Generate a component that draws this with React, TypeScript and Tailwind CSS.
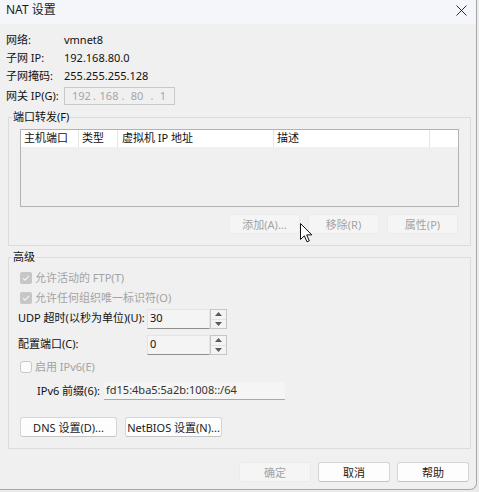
import React from "react";

const FONT = "[font-family:'Noto_Sans','Noto_Sans_CJK_SC',sans-serif]";

function Btn({ children, disabled, cls }: { children: React.ReactNode; disabled?: boolean; cls: string }) {
  return (
    <div
      className={
        "h-[20px] flex items-center justify-center rounded-[3px] border text-[11px] leading-none " +
        (disabled
          ? "bg-[#f5f5f5] border-[#ebebeb] text-[#a3a3a3] "
          : "bg-[#fdfdfd] border-[#d6d6d6] border-b-[#c4c4c4] text-[#1a1a1a] ") +
        cls
      }
    >
      {children}
    </div>
  );
}

function Check({ checked }: { checked?: boolean }) {
  if (checked) {
    return (
      <span className="w-[12px] h-[12px] rounded-[2px] bg-[#c6c6c6] flex items-center justify-center shrink-0">
        <svg viewBox="0 0 12 12" className="w-[12px] h-[12px]">
          <path d="M3 6.3 L5 8.2 L9 3.9" stroke="#f4f4f4" strokeWidth="1.2" fill="none" />
        </svg>
      </span>
    );
  }
  return <span className="w-[12px] h-[12px] rounded-[3px] border border-[#c9c9c9] bg-[#fbfbfb] shrink-0" />;
}

function Spinner() {
  return (
    <div className="w-[17px] h-[20px] border border-[#c6c6c6] bg-[#f3f3f3] flex flex-col">
      <div className="flex-1 flex items-center justify-center border-b border-[#e2e2e2]">
        <svg viewBox="0 0 7 4" className="w-[7px] h-[4px]">
          <path d="M0 4 L3.5 0 L7 4 Z" fill="#5a5a5a" />
        </svg>
      </div>
      <div className="flex-1 flex items-center justify-center">
        <svg viewBox="0 0 7 4" className="w-[7px] h-[4px]">
          <path d="M0 0 L7 0 L3.5 4 Z" fill="#5a5a5a" />
        </svg>
      </div>
    </div>
  );
}

function NumField({ value }: { value: string }) {
  return (
    <div className="flex ml-auto">
      <div className="w-[63px] h-[20px] bg-[#f4f4f4] border border-[#e4e4e4] border-b-[#8e8e8e] pl-[2px] text-[11px] leading-[15px] text-[#111]">
        {value}
      </div>
      <Spinner />
    </div>
  );
}

export default function App() {
  return (
    <div className={"w-[479px] h-[492px] bg-[#ebebeb] relative overflow-hidden " + FONT}>
      <div className="w-[477px] h-[490px] bg-[#f0f0f0] border-r border-b border-[#a8a8a8] rounded-br-[7px] flex flex-col text-[#111]">
        {/* Title bar */}
        <div className="h-[24px] bg-[#f5f6f9] flex items-start justify-between pl-[6px] pr-[9px] pt-[3px]">
          <span className="text-[12px] leading-[14px] text-[#1a1a1a]">NAT 设置</span>
          <svg viewBox="0 0 11 11" className="w-[11px] h-[11px] mt-[2px]">
            <path d="M0.5 0.5 L10.5 10.5 M10.5 0.5 L0.5 10.5" stroke="#2a2a2a" strokeWidth="1" />
          </svg>
        </div>

        {/* Body */}
        <div className="flex flex-col px-[6px] pt-[7px] text-[11px]">
          <div className="h-[18px] flex items-center">
            <span className="w-[58px]">网络:</span>
            <span>vmnet8</span>
          </div>
          <div className="h-[18px] flex items-center">
            <span className="w-[58px]">子网 IP:</span>
            <span>192.168.80.0</span>
          </div>
          <div className="h-[18px] flex items-center">
            <span className="w-[58px]">子网掩码:</span>
            <span>255.255.255.128</span>
          </div>
          <div className="h-[18px] mt-[2px] flex items-center">
            <span className="w-[58px]">网关 IP(G):</span>
            <div className="w-[111px] h-[18px] border border-[#c8c8c8] bg-[#f0f0f0] flex items-center text-[#a6a6a6] pl-[7px]">
              <span className="w-[18px] text-center">192</span>
              <span className="w-[9px] text-center">.</span>
              <span className="w-[20px] text-center">168</span>
              <span className="w-[8px] text-center">.</span>
              <span className="w-[20px] text-center">80</span>
              <span className="w-[10px] text-center">.</span>
              <span className="w-[12px] text-center">1</span>
            </div>
          </div>

          {/* Port forwarding group */}
          <div className="mt-[12px] ml-[2px] w-[463px] h-[129px] border border-[#dcdcdc] flex flex-col">
            <span className="-mt-[8px] ml-[3px] px-[1px] w-fit bg-[#f0f0f0] leading-[14px]">端口转发(F)</span>
            <div className="mt-[5px] ml-[11px] w-[439px] h-[78px] border border-[#b3b3b3] flex flex-col">
              <div className="h-[17px] bg-white flex items-center">
                <span className="w-[58px] h-full border-r border-[#e5e5e5] pl-[3px] flex items-center">主机端口</span>
                <span className="w-[39px] h-full border-r border-[#e5e5e5] pl-[3px] flex items-center">类型</span>
                <span className="w-[156px] h-full border-r border-[#e5e5e5] pl-[4px] flex items-center">虚拟机 IP 地址</span>
                <span className="w-[156px] h-full border-r border-[#e5e5e5] pl-[3px] flex items-center">描述</span>
              </div>
            </div>
            <div className="mt-[7px] flex gap-[8px] justify-end pr-[12px]">
              <Btn disabled cls="w-[71px]">添加(A)...</Btn>
              <Btn disabled cls="w-[71px]">移除(R)</Btn>
              <Btn disabled cls="w-[71px]">属性(P)</Btn>
            </div>
          </div>

          {/* Advanced group */}
          <div className="mt-[11px] ml-[2px] w-[463px] h-[192px] border border-[#dcdcdc] flex flex-col">
            <span className="-mt-[8px] ml-[3px] px-[1px] w-fit bg-[#f0f0f0] leading-[14px]">高级</span>
            <div className="mt-[4px] ml-[11px] h-[20px] flex items-center gap-[3px] text-[#a3a3a3]">
              <Check checked />
              <span>允许活动的 FTP(T)</span>
            </div>
            <div className="ml-[11px] h-[20px] flex items-center gap-[3px] text-[#a3a3a3]">
              <Check checked />
              <span>允许任何组织唯一标识符(O)</span>
            </div>
            <div className="mt-[1px] ml-[9px] w-[209px] h-[20px] flex items-center">
              <span className="-mt-[1px]">UDP 超时(以秒为单位)(U):</span>
              <NumField value="30" />
            </div>
            <div className="mt-[6px] ml-[9px] w-[209px] h-[20px] flex items-center">
              <span className="-mt-[1px]">配置端口(C):</span>
              <NumField value="0" />
            </div>
            <div className="mt-[2px] ml-[11px] h-[20px] flex items-center gap-[3px] text-[#a3a3a3]">
              <Check />
              <span>启用 IPv6(E)</span>
            </div>
            <div className="mt-[5px] ml-[28px] h-[18px] flex items-center">
              <span className="w-[67px]">IPv6 前缀(6):</span>
              <div className="w-[181px] h-[18px] bg-[#f5f5f5] border-b border-[#a9a9a9] pl-[2px] flex items-center text-[#333]">
                fd15:4ba5:5a2b:1008::/64
              </div>
            </div>
            <div className="mt-[17px] ml-[11px] flex gap-[8px]">
              <Btn cls="w-[97px]">DNS 设置(D)...</Btn>
              <Btn cls="w-[97px]">NetBIOS 设置(N)...</Btn>
            </div>
          </div>

          {/* Dialog buttons */}
          <div className="mt-[13px] mr-[1px] flex justify-end gap-[7px]">
            <Btn disabled cls="w-[72px]">确定</Btn>
            <Btn cls="w-[72px]">取消</Btn>
            <Btn cls="w-[72px]">帮助</Btn>
          </div>
        </div>
      </div>

      {/* Mouse cursor */}
      <svg viewBox="0 0 13 20" className="absolute left-[300px] top-[223px] w-[13px] h-[20px]">
        <path
          d="M0.5 0.5 L0.5 16.5 L4.3 12.8 L7 18.8 L9.3 17.8 L6.7 11.9 L11.8 11.9 Z"
          fill="#ffffff"
          stroke="#111111"
          strokeWidth="1"
          strokeLinejoin="round"
        />
      </svg>
    </div>
  );
}
